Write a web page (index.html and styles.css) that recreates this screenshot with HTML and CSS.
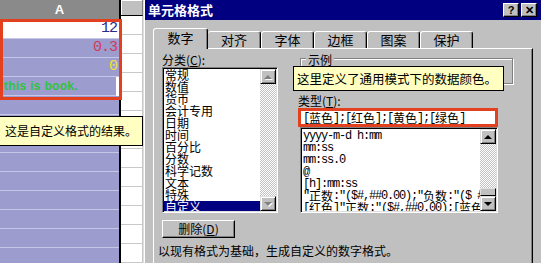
FILE: index.html
```html
<!DOCTYPE html>
<html>
<head>
<meta charset="utf-8">
<link rel="stylesheet" href="styles.css">
</head>
<body>
<div class="screen">
  <div class="sheet">
    <div class="col col-a">
      <div class="hd">A</div>
      <div class="cell white c-blue">12</div>
      <div class="cell c-red">0.3</div>
      <div class="cell c-yellow">0</div>
      <div class="cell c-green left">this is book.</div>
      <div class="cell"></div><div class="cell"></div><div class="cell"></div><div class="cell"></div>
      <div class="cell"></div><div class="cell"></div><div class="cell"></div><div class="cell"></div>
      <div class="cell"></div>
    </div>
    <div class="divider"></div>
    <div class="col col-b">
      <div class="hd"></div>
      <div class="cell"></div><div class="cell"></div><div class="cell"></div><div class="cell"></div>
      <div class="cell"></div><div class="cell"></div><div class="cell"></div><div class="cell"></div>
      <div class="cell"></div><div class="cell"></div><div class="cell"></div><div class="cell"></div>
      <div class="cell"></div>
    </div>
    <div class="redbox"></div>
    <div class="tip sheet-tip">这是自定义格式的结果。</div>
  </div>

  <div class="dialog">
    <div class="titlebar">
      <span class="title">单元格格式</span>
      <span class="tbtns"><span class="tbtn">?</span><span class="tbtn">✕</span></span>
    </div>
    <div class="body">
      <div class="tabs">
        <div class="tab active">数字</div>
        <div class="tab">对齐</div>
        <div class="tab">字体</div>
        <div class="tab">边框</div>
        <div class="tab">图案</div>
        <div class="tab">保护</div>
      </div>
      <div class="panel">
        <div class="cols">
          <div class="left">
            <div class="lbl">分类(<u>C</u>):</div>
            <div class="listbox cat">
              <div class="items">
                <div class="it">常规</div>
                <div class="it">数值</div>
                <div class="it">货币</div>
                <div class="it">会计专用</div>
                <div class="it">日期</div>
                <div class="it">时间</div>
                <div class="it">百分比</div>
                <div class="it">分数</div>
                <div class="it">科学记数</div>
                <div class="it">文本</div>
                <div class="it">特殊</div>
                <div class="it sel">自定义</div>
              </div>
              <div class="sb">
                <div class="sbtn"><span class="arr up dis"></span></div>
                <div class="track"></div>
                <div class="sbtn"><span class="arr down dis"></span></div>
              </div>
            </div>
          </div>
          <div class="right">
            <div class="group"><span class="lg">示例</span></div>
            <div class="lbl type">类型(<u>T</u>):</div>
            <div class="input mono"><span>[<span class="z">蓝色</span>];[<span class="z">红色</span>];[<span class="z">黄色</span>];[<span class="z">绿色</span>]</span></div>
            <div class="listbox fmt">
              <div class="items mono">
                <div class="it">yyyy-m-d h:mm</div>
                <div class="it">mm:ss</div>
                <div class="it">mm:ss.0</div>
                <div class="it">@</div>
                <div class="it">[h]:mm:ss</div>
                <div class="it">"<span class="z">正数</span>:"($#,##0.00);"<span class="z">负数</span>:"($ #,##0.00)</div>
                <div class="it">[<span class="z">红色</span>]"<span class="z">正数</span>:"($#,##0.00);[<span class="z">蓝色</span>]"<span class="z">负数</span>:"</div>
              </div>
              <div class="sb">
                <div class="sbtn"><span class="arr up"></span></div>
                <div class="track"></div>
                <div class="thumb"></div>
                <div class="sbtn"><span class="arr down"></span></div>
              </div>
            </div>
            <div class="tip dlg-tip">这里定义了通用模式下的数据颜色。</div>
          </div>
        </div>
        <div class="btn">删除(<u>D</u>)</div>
        <div class="note">以现有格式为基础，生成自定义的数字格式。</div>
      </div>
    </div>
  </div>
</div>
</body>
</html>
```

FILE: styles.css
```css
* { box-sizing: border-box; }
html, body { margin: 0; padding: 0; }
body {
  width: 541px;
  height: 263px;
  overflow: hidden;
  background: #c0c0c0;
  font-family: "Noto Sans CJK SC", "Liberation Sans", sans-serif;
  font-size: 12px;
  color: #000;
}
.screen { display: flex; height: 263px; }

/* spreadsheet */
.sheet { position: relative; width: 143px; display: flex; background: #fff; flex: none; }
.col { display: flex; flex-direction: column; }
.col-a { width: 119px; }
.col-b { width: 22px; }
.divider { width: 2px; background: #000; }
.hd {
  height: 20px;
  border-bottom: 1px solid #000;
  background: #8a8a8a;
  color: #fff;
  text-align: center;
  font: bold 13px/19px "Liberation Sans", sans-serif;
}
.col-b .hd { background: #c0c0c0; box-shadow: inset 1px 1px 0 #fff; border-right: 1px solid #808080; }
.cell {
  height: 19px;
  flex: none;
  border-bottom: 1px solid #c6c6e6;
  background: #9c9ccf;
  text-align: right;
  padding-right: 2px;
  font: 15px/18px "Liberation Mono", monospace;
  letter-spacing: -1px;
}
.col-b .cell { background: #fff; border-bottom: 1px solid #c8c8c8; border-right: 1px solid #c8c8c8; }
.cell.white { background: #fff; }
.c-blue { color: #2a2a8a; }
.c-red { color: #d03a5c; }
.c-yellow { color: #ece23a; }
.c-green { color: #2fc43a; }
.cell.left { text-align: left; padding-left: 4px; font: bold 12px/18px "Liberation Sans", sans-serif; letter-spacing: 0.3px; }
.redbox {
  position: absolute;
  left: 0; top: 19px;
  width: 122px; height: 81px;
  border: 3px solid #e2401e;
}
.tip {
  position: absolute;
  background: #ffffc2;
  border: 1px solid #000;
  white-space: nowrap;
}
.sheet-tip {
  left: -1px; top: 116px;
  width: 144px; height: 30px;
  padding-left: 5px;
  font-size: 12px;
  line-height: 28px;
}

/* dialog */
.dialog {
  flex: 1;
  background: #c0c0c0;
  border-left: 1px solid #dfdfdf;
  box-shadow: inset 1px 0 0 #fff;
  padding-left: 1px;
  display: flex;
  flex-direction: column;
}
.titlebar {
  height: 20px;
  background: #000080;
  color: #fff;
  display: flex;
  align-items: center;
  justify-content: space-between;
  padding: 0 4px 0 3px;
}
.title { font-weight: bold; font-size: 13px; line-height: 20px; }
.tbtns { display: flex; gap: 2px; }
.tbtn {
  width: 16px; height: 14px;
  background: #c0c0c0;
  color: #000;
  border: 1px solid;
  border-color: #fff #000 #000 #fff;
  box-shadow: inset -1px -1px 0 #808080;
  font: bold 11px/12px "Liberation Sans", sans-serif;
  text-align: center;
}
.body { padding: 8px 8px 0 8px; display: flex; flex-direction: column; }
.tabs { display: flex; align-items: flex-end; height: 20px; position: relative; z-index: 2; }
.tab {
  height: 17px;
  width: 53px;
  border: 1px solid #fff;
  border-bottom: none;
  border-right: 1px solid #000;
  box-shadow: inset -1px 0 0 #808080;
  border-radius: 3px 3px 0 0;
  text-align: center;
  font-size: 13px;
  line-height: 16px;
  background: #c0c0c0;
}
.tab.active {
  width: 55px;
  height: 21px;
  margin-bottom: -1px;
  line-height: 18px;
}
.tab.active + .tab { border-left: none; }
.panel {
  height: 230px;
  border: 1px solid;
  border-color: #fff #000 #000 #fff;
  box-shadow: inset -1px -1px 0 #808080;
  padding: 4px 0 0 8px;
}
.cols { display: flex; }
.left { width: 116px; }
.lbl { height: 14px; line-height: 14px; padding-left: 0; }
.listbox {
  display: flex;
  background: #fff;
  border: 1px solid;
  border-color: #808080 #fff #fff #808080;
  box-shadow: inset 1px 1px 0 #000, inset -1px -1px 0 #dfdfdf;
  padding: 1px;
  overflow: hidden;
}
.listbox.cat { height: 146px; }
.items { flex: 1; overflow: hidden; padding-top: 0; }
.it { height: 12px; line-height: 12px; padding-left: 1px; white-space: nowrap; }
.it.sel { background: #000080; color: #fff; }
.sb { width: 16px; flex: none; display: flex; flex-direction: column; background: repeating-conic-gradient(#fff 0 25%, #c0c0c0 0 50%) 0 0 / 2px 2px; }
.sbtn {
  height: 15px; flex: none;
  background: #c0c0c0;
  border: 1px solid;
  border-color: #dfdfdf #000 #000 #dfdfdf;
  box-shadow: inset 1px 1px 0 #fff, inset -1px -1px 0 #808080;
  display: flex; align-items: center; justify-content: center;
}
.track { flex: 1; }
.thumb {
  height: 8px; flex: none;
  background: #c0c0c0;
  border: 1px solid;
  border-color: #dfdfdf #000 #000 #dfdfdf;
}
.arr { width: 0; height: 0; border-left: 4px solid transparent; border-right: 4px solid transparent; }
.arr.up { border-bottom: 4px solid #000; }
.arr.down { border-top: 4px solid #000; }
.arr.up.dis { border-bottom-color: #808080; filter: drop-shadow(1px 1px 0 #fff); }
.arr.down.dis { border-top-color: #808080; filter: drop-shadow(1px 1px 0 #fff); }

.right { width: 215px; margin-left: 20px; position: relative; }
.group {
  margin-top: 5px;
  margin-left: 2px;
  height: 26px;
  width: 213px;
  border: 1px solid #808080;
  box-shadow: 1px 1px 0 #fff, inset 1px 1px 0 #fff;
}
.lg {
  display: inline-block;
  position: relative;
  top: -8px;
  margin-left: 5px;
  padding: 0 2px;
  background: #c0c0c0;
  line-height: 14px;
}
.lbl.type { margin-top: 10px; }
.mono { font-family: "Liberation Mono", monospace; font-size: 12px; letter-spacing: -1.2px; }
.z { font-family: "Noto Sans CJK SC", sans-serif; letter-spacing: 0; vertical-align: top; line-height: 12px; }
.input {
  height: 19px;
  width: 200px;
  background: #fff;
  border: 3px solid #e2401e;
  display: flex;
  align-items: center;
  line-height: 12px;
  padding-left: 2px;
  white-space: nowrap;
  overflow: hidden;
}
.listbox.fmt { height: 86px; width: 198px; margin-left: 2px; }
.listbox.fmt .items { padding-top: 1px; }
.dlg-tip {
  left: -5px; top: 13px;
  width: 211px; height: 25px;
  padding-left: 3px;
  font-size: 12.5px;
  line-height: 23px;
}
.btn {
  margin-top: 7px;
  width: 73px; height: 18px;
  border: 1px solid;
  border-color: #fff #000 #000 #fff;
  box-shadow: inset -1px -1px 0 #808080;
  text-align: center;
  line-height: 16px;
}
.note { margin-top: 7px; margin-left: -4px; line-height: 12px; }
```
